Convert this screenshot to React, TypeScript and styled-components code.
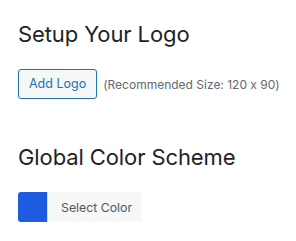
import React from "react";
import styled, { createGlobalStyle } from "styled-components";

const Global = createGlobalStyle`
  html, body { margin: 0; padding: 0; background: #fff; }
  body {
    font-family: Inter, "Noto Sans", sans-serif;
    font-feature-settings: "calt" 0;
    -webkit-font-smoothing: antialiased;
  }
`;

const Page = styled.div`
  width: 296px;
  height: 241px;
  box-sizing: border-box;
  padding: 18px 0 0 18px;
  display: flex;
  flex-direction: column;
`;

const Section = styled.section<{ $gap: number }>`
  display: flex;
  flex-direction: column;
  gap: ${(p) => p.$gap}px;
  margin-bottom: 42px;
`;

const Heading = styled.h2`
  margin: 0;
  font-size: 22px;
  font-weight: 400;
  line-height: 32px;
  color: #1d2327;
  letter-spacing: -0.1px;
`;

const Row = styled.div`
  display: flex;
  align-items: center;
  gap: 6px;
`;

const OutlineButton = styled.button`
  box-sizing: border-box;
  height: 30px;
  padding: 0 10px;
  border: 1px solid #2271b1;
  border-radius: 3px;
  background: #f6f7f7;
  color: #2271b1;
  font-family: inherit;
  font-feature-settings: "calt" 0;
  font-size: 12.5px;
  line-height: 28px;
`;

const Hint = styled.span`
  font-size: 12px;
  color: #646970;
`;

const ColorPicker = styled.div`
  display: flex;
  height: 30px;
  border-radius: 3px;
  overflow: hidden;
  align-self: flex-start;
`;

const Swatch = styled.span<{ $color: string }>`
  width: 29px;
  background: ${(p) => p.$color};
  border-right: 1px solid #dcdcde;
`;

const PickerLabel = styled.button`
  border: 0;
  background: #f6f7f7;
  color: #50575e;
  font-family: inherit;
  font-size: 12.3px;
  padding: 0 10px 0 13px;
`;

export default function App() {
  return (
    <>
      <Global />
      <Page>
        <Section $gap={19}>
          <Heading>Setup Your Logo</Heading>
          <Row>
            <OutlineButton>Add Logo</OutlineButton>
            <Hint>(Recommended Size: 120 x 90)</Hint>
          </Row>
        </Section>
        <Section $gap={19}>
          <Heading>Global Color Scheme</Heading>
          <ColorPicker>
            <Swatch $color="#1e5be0" />
            <PickerLabel>Select Color</PickerLabel>
          </ColorPicker>
        </Section>
      </Page>
    </>
  );
}
